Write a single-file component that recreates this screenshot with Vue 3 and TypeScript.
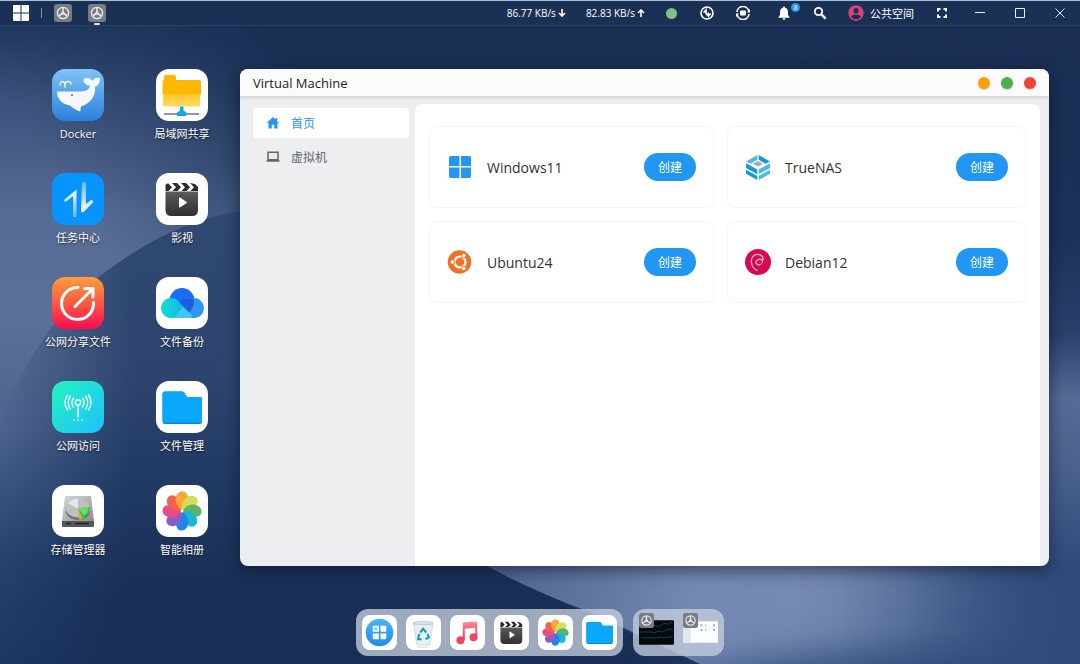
<script setup lang="ts">
interface Entry {
  name: string
  icon: string
}

const shortcuts: Entry[] = [
  { name: 'Docker', icon: 'docker' },
  { name: '局域网共享', icon: 'lan' },
  { name: '任务中心', icon: 'tasks' },
  { name: '影视', icon: 'film' },
  { name: '公网分享文件', icon: 'share' },
  { name: '文件备份', icon: 'backup' },
  { name: '公网访问', icon: 'antenna' },
  { name: '文件管理', icon: 'files' },
  { name: '存储管理器', icon: 'disk' },
  { name: '智能相册', icon: 'photos' },
]

const systems: Entry[] = [
  { name: 'Windows11', icon: 'windows' },
  { name: 'TrueNAS', icon: 'truenas' },
  { name: 'Ubuntu24', icon: 'ubuntu' },
  { name: 'Debian12', icon: 'debian' },
]

const dock: Entry[] = [
  { name: '应用中心', icon: 'apps' },
  { name: '回收站', icon: 'trash' },
  { name: '音乐', icon: 'music' },
  { name: '影视', icon: 'film' },
  { name: '智能相册', icon: 'photos' },
  { name: '文件管理', icon: 'files' },
]

const petals: string[] = ['#ffa733', '#cfe05a', '#5bb26c', '#1cb8d2', '#1f86e6', '#8a5cc6', '#ea4a8a', '#f4604f']
</script>

<template>
  <div class="desktop">
    <svg class="defs" aria-hidden="true">
      <defs>
        <linearGradient id="g-docker" x1="0" y1="0" x2="0" y2="1"><stop offset="0" stop-color="#7fc4f6" /><stop offset="1" stop-color="#2b80dc" /></linearGradient>
        <linearGradient id="g-share" x1="0" y1="0" x2="0" y2="1"><stop offset="0" stop-color="#ff9d3c" /><stop offset="0.5" stop-color="#fd5a42" /><stop offset="1" stop-color="#ff0a50" /></linearGradient>
        <linearGradient id="g-antenna" x1="0" y1="0" x2="1" y2="1"><stop offset="0" stop-color="#22f5bd" /><stop offset="1" stop-color="#1fc0ff" /></linearGradient>
        <linearGradient id="g-up" x1="0" y1="0" x2="0" y2="1"><stop offset="0" stop-color="#fff" /><stop offset="1" stop-color="#fff" stop-opacity="0.35" /></linearGradient>
        <linearGradient id="g-down" x1="0" y1="0" x2="0" y2="1"><stop offset="0" stop-color="#fff" stop-opacity="0.35" /><stop offset="1" stop-color="#fff" /></linearGradient>
        <linearGradient id="g-film" x1="0" y1="0" x2="0" y2="1"><stop offset="0" stop-color="#5a5a5c" /><stop offset="1" stop-color="#303032" /></linearGradient>
        <linearGradient id="g-front" x1="0" y1="0" x2="0" y2="1"><stop offset="0" stop-color="#ffc62c" /><stop offset="1" stop-color="#ffda62" /></linearGradient>
        <linearGradient id="g-cloud" x1="0" y1="0" x2="1" y2="0"><stop offset="0" stop-color="#10dcd6" /><stop offset="1" stop-color="#12aef0" /></linearGradient>
        <linearGradient id="g-apps" x1="0" y1="0" x2="0" y2="1"><stop offset="0" stop-color="#4fb4f4" /><stop offset="1" stop-color="#1f8de8" /></linearGradient>
        <linearGradient id="g-music" x1="0" y1="0" x2="0" y2="1"><stop offset="0" stop-color="#fc8a96" /><stop offset="1" stop-color="#f03552" /></linearGradient>
        <linearGradient id="g-disk" x1="0" y1="0" x2="1" y2="1"><stop offset="0" stop-color="#d8d8d8" /><stop offset="1" stop-color="#8d8d8d" /></linearGradient>
      </defs>

      <symbol id="i-docker" viewBox="0 0 52 52">
        <rect width="52" height="52" fill="url(#g-docker)" />
        <path d="M5 22.500h21c7 0 11-1 12-6-4 0-6.500-2.500-6.500-6.500 4-2 7.500-1 8.500 2 2-3 5-4 8-3 0 5-2 8-5 8.500 1 10-5 17-14 20-1 2 0 4-1 5-3-1-8-4-10-6C10 35 5 30 5 22.500Z" fill="#f5f9ff" />
        <path d="M8 16c0-5 5-4 5 0 0-4 5-5 6-1M13 15v3" fill="none" stroke="#fff" stroke-width="1.300" stroke-linecap="round" />
        <circle cx="20" cy="26" r="1" fill="#3a7fc0" />
      </symbol>

      <symbol id="i-lan" viewBox="0 0 52 52">
        <rect width="52" height="52" fill="#fff" />
        <path d="M8 8q0-2 2-2h8q2 0 2 2v3h23q2 0 2 2v12l-1 2H8l-1.500-2V13q0-2 1.500-2Z" fill="#ffb800" />
        <path d="M7 25h37v11q0 1.500-1.500 1.500h-34Q7 37.500 7 36Z" fill="url(#g-front)" />
        <path d="M8 45h35" stroke="#66788a" stroke-width="1.500" />
        <path d="M24 37.500h3.500v4l3 2V47h-9.500v-3.500l3-2Z" fill="#18a8e8" />
      </symbol>

      <symbol id="i-tasks" viewBox="0 0 52 52">
        <rect width="52" height="52" fill="#0894ff" />
        <path d="M12.500 26.500 24.500 16.500v27q-3.500 2-3.500-1V23l-6.500 5.500Q11 29 12.500 26.500Z" fill="url(#g-up)" />
        <path d="M30 10q2-2.500 4 0v21l5-4q3 0 2 2.500L31 39.500q-2 0-2-2Z" fill="url(#g-down)" />
      </symbol>

      <symbol id="i-film" viewBox="0 0 52 52">
        <rect width="52" height="52" fill="#fff" />
        <path d="M9.500 18.500h32.500V37q0 6-6 6H15.500q-6 0-6-6Z" fill="url(#g-film)" />
        <path d="M9.500 18V12q1-2 3-1.500l3.500 3.800L12.500 18ZM16 10l4 4.300L16.500 18h5l3.500-3.700-4-4.300ZM25 10l4 4.300L25.500 18h5l3.500-3.700-4-4.300ZM34 10l4 4.300L34.500 18H42v-4l-3-3Z" fill="#2c2c2e" />
        <path d="M23 25.500q0-1.500 1.300-.7l6 4q1 .7 0 1.400l-6 4q-1.300.8-1.300-.7Z" fill="#fff" />
      </symbol>

      <symbol id="i-share" viewBox="0 0 52 52">
        <rect width="52" height="52" fill="url(#g-share)" />
        <path d="M26 10.500a16 16 0 1 0 15.500 15" fill="none" stroke="#fff" stroke-width="3" stroke-linecap="round" />
        <path d="M23 29.500 40.500 12M32.500 11.500h8.500V20" fill="none" stroke="#fff" stroke-width="3" stroke-linecap="round" stroke-linejoin="round" />
      </symbol>

      <symbol id="i-backup" viewBox="0 0 52 52">
        <rect width="52" height="52" fill="#fff" />
        <circle cx="26" cy="23.500" r="12.500" fill="#1a6cf2" />
        <path d="M37 41a10 10 0 1 0-5-18L20 41Z" fill="#3294f6" />
        <path d="M26 22h11.800q1 7-4.300 13.500L24 27Z" fill="#1a5fe0" />
        <path d="M15 41a10 10 0 1 1 8-16l13 14q-2 2-5 2Z" fill="url(#g-cloud)" />
        <path d="m27 30 9.500 9-2 2H18Z" fill="#43c7f5" />
      </symbol>

      <symbol id="i-antenna" viewBox="0 0 52 52">
        <rect width="52" height="52" fill="url(#g-antenna)" />
        <g fill="none" stroke="#fff" stroke-width="1.400" stroke-linecap="round">
          <circle cx="26" cy="21.500" r="2.700" />
          <path d="M26 24.500V36M21.500 17q-3 4.500 0 9M18.500 15q-4.500 6.500 0 13M15.500 14q-5 7.500 0 15M30.500 17q3 4.500 0 9M33.500 15q4.500 6.500 0 13M36.500 14q5 7.500 0 15" />
        </g>
        <path d="M21 38.500h1.500v1.500H21ZM25.300 38.500h1.500v1.500h-1.500ZM29.500 38.500H31v1.500h-1.500Z" fill="#fff" />
      </symbol>

      <symbol id="i-files" viewBox="0 0 52 52">
        <rect width="52" height="52" fill="#fff" />
        <path d="M6.500 13q0-2.500 2.500-2.500h17q2 0 2.500 1.500l1.500 3q.5 1 2 1h12q2 0 2 2v22.500q0 2.500-2.500 2.500H9q-2.500 0-2.500-2.500Z" fill="#0b85dc" />
        <path d="M6.500 13q0-2.500 2.500-2.500h17q2 0 2.500 1.500l1.500 3q.5 1 2 1h12q2 0 2 2v21q0 2.500-2.500 2.500H9q-2.500 0-2.500-2.500Z" fill="#0aa8fc" />
      </symbol>

      <symbol id="i-disk" viewBox="0 0 52 52">
        <rect width="52" height="52" fill="#fff" />
        <path d="M13 11h26l3 25H10Z" fill="url(#g-disk)" />
        <path d="M10 36h32v5q0 1-1 1H11q-1 0-1-1Z" fill="#55585a" />
        <path d="M14 38.500h5M23 38.500h14" stroke="#222" stroke-width="1.500" />
        <path d="M14 24v4q3 7 12 7t12-7v-4Z" fill="#727476" />
        <ellipse cx="26" cy="23.500" rx="12" ry="9" fill="#bfc1c1" />
        <path d="m26 23.500-10-5q4-5 10-5Z" fill="#e4e5e5" />
        <path d="M26 23.500 38 22q0 6-5 9v3l-4 1v-3Z" fill="#35bd45" />
        <path d="m26 23.500 1 11h3v-3Z" fill="#e0a53a" />
        <path d="m26 23.500 10-2q1 6-4 9Z" fill="#67dd6c" />
      </symbol>

      <symbol id="i-photos" viewBox="0 0 52 52">
        <rect width="52" height="52" fill="#fff" />
        <path
          v-for="(color, i) in petals"
          :key="color"
          d="M26 26Q18 19 20 12q2-5.500 6.500-5.500T32 12q2 6-6 14Z"
          :fill="color"
          :transform="`rotate(${i * 45} 26 26)`"
        />
        <path d="M26 26Q18 19 20 12q2-5.500 6-5.500Z" fill="#ffa733" />
        <circle cx="26" cy="26" r="1.500" fill="#fff" />
      </symbol>

      <symbol id="i-apps" viewBox="0 0 52 52">
        <rect width="52" height="52" fill="#fff" />
        <circle cx="26" cy="26" r="20.500" fill="url(#g-apps)" />
        <path d="M17 16h8v9h-9v-8q0-1 1-1ZM27.500 16H35q1 0 1 1v8h-8.500ZM16 27.500h9V36h-8q-1 0-1-1ZM27.500 27.500H36V35q0 1-1 1h-7.500Z" fill="#fff" />
        <path d="M18.500 18.500h4v4h-4Z" fill="#7cc6f6" />
      </symbol>

      <symbol id="i-trash" viewBox="0 0 52 52">
        <rect width="52" height="52" fill="#fff" />
        <path d="M11 12h29l-4 32q-10 3-20 0Z" fill="#e8edf2" stroke="#c6cfd8" />
        <ellipse cx="25.500" cy="12" rx="15" ry="2.500" fill="#dce3e9" stroke="#aeb9c4" />
        <path d="M17 47q8 3 17 0" stroke="#dce4ea" stroke-width="2" fill="none" />
        <path d="m21 26 4.500-5.500L30 26M32 28l2 5-5 3M23 36h-5l1.500-8" fill="none" stroke="#139ab3" stroke-width="3" />
      </symbol>

      <symbol id="i-music" viewBox="0 0 52 52">
        <rect width="52" height="52" fill="#fff" />
        <path d="M19 13q0-1.500 1.500-1.700L39 9.500q1.500 0 1.500 1.500v21h-3V19L22 20.500V37h-3Z" fill="url(#g-music)" />
        <circle cx="15.500" cy="37.500" r="6" fill="#f04460" />
        <circle cx="35" cy="33" r="6" fill="#f04460" />
      </symbol>

      <symbol id="i-wheel" viewBox="0 0 18 18">
        <rect width="18" height="18" rx="3" fill="#767b84" />
        <circle cx="9" cy="9" r="5.600" fill="none" stroke="#e6e8ea" stroke-width="1.400" />
        <path d="M9 3.500V9M9 9l-4.500 3M9 9l4.500 3" stroke="#e6e8ea" stroke-width="1.600" />
        <circle cx="9" cy="9" r="1.600" fill="#e6e8ea" />
      </symbol>

      <symbol id="i-windows" viewBox="0 0 26 26">
        <path d="M4 2h8.500v10H2V4q0-2 2-2ZM14 2h8q2 0 2 2v8H14ZM2 13.500h10.500V24H4q-2 0-2-2ZM14 13.500h10V22q0 2-2 2h-8Z" fill="#2196f3" />
      </symbol>

      <symbol id="i-truenas" viewBox="0 0 26 26">
        <path d="M1 9.200 12.300 15.500v4.800L1 14ZM1 15.700 12.300 22v4L1 19.800Z" fill="#159bd2" />
        <path d="M25 9.200 13.700 15.500v4.800L25 14ZM25 15.700 13.700 22v4L25 19.800Z" fill="#4bb9e8" />
        <path d="M1 7.500 12.300 1v4.800L5.500 9.700Z" fill="#4bb9e8" />
        <path d="M25 7.500 13.700 1v4.800l6.800 3.900Z" fill="#159bd2" />
        <path d="m13 7 5 2.800-5 2.800-5-2.800Z" fill="#a4abb0" />
      </symbol>

      <symbol id="i-ubuntu" viewBox="0 0 26 26">
        <circle cx="12.500" cy="13" r="11.800" fill="#ee7325" />
        <circle cx="13" cy="13" r="5.500" fill="none" stroke="#fff" stroke-width="2.200" />
        <g fill="#fff" stroke="#ee7325" stroke-width="1">
          <circle cx="5.500" cy="13" r="2.300" />
          <circle cx="16.800" cy="6.500" r="2.300" />
          <circle cx="16.800" cy="19.500" r="2.300" />
        </g>
      </symbol>

      <symbol id="i-debian" viewBox="0 0 26 26">
        <circle cx="13" cy="13" r="13" fill="#d40a53" />
        <path d="M14.500 15.800c-2.500.4-4-1.300-3.300-3.400.8-2.300 4.500-3 6.200-.8 1.700-3-1-6.500-5-6.300-4 .2-6.500 3.500-6 8 .4 4 2.600 6.600 5.500 8" fill="none" stroke="#f5b7cc" stroke-width="1.300" stroke-linecap="round" />
        <path d="M14.500 15.800c2-.3 3.300-2 2.900-4.200" fill="none" stroke="#f5b7cc" />
      </symbol>
    </svg>

    <svg class="wallpaper" viewBox="0 0 1080 664" preserveAspectRatio="none" aria-hidden="true">
      <defs>
        <linearGradient id="w-base" x1="0" y1="0" x2="0" y2="1">
          <stop offset="0" stop-color="#1b3156" />
          <stop offset="0.060" stop-color="#263d66" />
          <stop offset="0.150" stop-color="#3b527c" />
          <stop offset="0.320" stop-color="#556b94" />
          <stop offset="0.480" stop-color="#5b7098" />
          <stop offset="0.640" stop-color="#4d648e" />
          <stop offset="0.840" stop-color="#274370" />
          <stop offset="1" stop-color="#1d3763" />
        </linearGradient>
        <linearGradient id="w-top" x1="120" y1="260" x2="330" y2="110" gradientUnits="userSpaceOnUse">
          <stop offset="0" stop-color="#1a2f54" stop-opacity="0" />
          <stop offset="0.500" stop-color="#1a2f54" stop-opacity="0.400" />
          <stop offset="1" stop-color="#1a2f54" />
        </linearGradient>
        <linearGradient id="w-hill" x1="0" y1="200" x2="0" y2="600" gradientUnits="userSpaceOnUse">
          <stop offset="0" stop-color="#304971" />
          <stop offset="0.450" stop-color="#2d456e" />
          <stop offset="0.750" stop-color="#1f3861" />
          <stop offset="1" stop-color="#182e55" />
        </linearGradient>
        <linearGradient id="w-fade" x1="0" y1="0" x2="130" y2="0" gradientUnits="userSpaceOnUse">
          <stop offset="0" stop-color="#fff" stop-opacity="0" />
          <stop offset="0.500" stop-color="#fff" stop-opacity="0.500" />
          <stop offset="1" stop-color="#fff" />
        </linearGradient>
        <mask id="w-hill-mask" maskUnits="userSpaceOnUse" x="0" y="0" width="1080" height="664">
          <rect width="1080" height="664" fill="url(#w-fade)" />
        </mask>
        <linearGradient id="w-low" x1="480" y1="0" x2="1080" y2="0" gradientUnits="userSpaceOnUse">
          <stop offset="0" stop-color="#4a628d" />
          <stop offset="0.350" stop-color="#7388b0" />
          <stop offset="0.600" stop-color="#758ab1" />
          <stop offset="1" stop-color="#365282" />
        </linearGradient>
        <linearGradient id="w-side" x1="0" y1="0" x2="0" y2="1">
          <stop offset="0" stop-color="#1a2e53" />
          <stop offset="0.350" stop-color="#1b3158" />
          <stop offset="0.500" stop-color="#28406b" />
          <stop offset="0.600" stop-color="#566b96" />
          <stop offset="0.700" stop-color="#4b628e" />
          <stop offset="0.850" stop-color="#304b7b" />
          <stop offset="1" stop-color="#304b7b" />
        </linearGradient>
        <linearGradient id="w-side-fade" x1="800" y1="0" x2="1060" y2="0" gradientUnits="userSpaceOnUse">
          <stop offset="0" stop-color="#fff" stop-opacity="0" />
          <stop offset="0.400" stop-color="#fff" stop-opacity="0.200" />
          <stop offset="1" stop-color="#fff" />
        </linearGradient>
        <mask id="w-side-mask" maskUnits="userSpaceOnUse" x="800" y="0" width="280" height="664">
          <rect x="800" width="280" height="664" fill="url(#w-side-fade)" />
        </mask>
        <filter id="w-soft" filterUnits="userSpaceOnUse" x="400" y="500" width="900" height="400"><feGaussianBlur stdDeviation="18" /></filter>
      </defs>
      <rect width="1080" height="664" fill="url(#w-base)" />
      <rect width="1080" height="420" fill="url(#w-top)" />
      <path d="M0 420Q40 325 100 276 170 222 240 211L480 420 487 566 590 615 700 664H0Z" fill="url(#w-hill)" mask="url(#w-hill-mask)" />
      <path d="M400 480 487 566Q535 592 590 612L700 664H1080V480Z" fill="url(#w-low)" />
      <path d="M640 690Q820 630 1180 650V760H640Z" fill="#36517f" filter="url(#w-soft)" />
      <rect x="800" width="280" height="664" fill="url(#w-side)" mask="url(#w-side-mask)" />
    </svg>

    <header class="topbar">
      <nav class="tasks" aria-label="任务栏">
        <button class="bar-button start" aria-label="开始">
          <svg viewBox="0 0 16 16" width="16" height="16"><path d="M1 0h6.500v7.500H0V1q0-1 1-1ZM8.500 0H15q1 0 1 1v6.500H8.500ZM0 8.500h7.500V16H1q-1 0-1-1ZM8.500 8.500H16V15q0 1-1 1H8.500Z" fill="#fff" /></svg>
        </button>
        <span class="bar-divider"></span>
        <button class="bar-button task" aria-label="虚拟机"><svg width="18" height="18"><use href="#i-wheel" /></svg></button>
        <button class="bar-button task active" aria-label="Virtual Machine"><svg width="18" height="18"><use href="#i-wheel" /></svg></button>
      </nav>

      <div class="status">
        <span class="speed">86.77 KB/s<svg viewBox="0 0 8 8" width="8" height="8"><path d="M4 0v6.500M1 4l3 3 3-3" fill="none" stroke="#fff" stroke-width="1.600" /></svg></span>
        <span class="speed">82.83 KB/s<svg viewBox="0 0 8 8" width="8" height="8"><path d="M4 8V1.500M1 4l3-3 3 3" fill="none" stroke="#fff" stroke-width="1.600" /></svg></span>
        <span class="bar-button tool"><i class="online"></i></span>
        <button class="bar-button tool" aria-label="传输">
          <svg viewBox="0 0 14 14" width="14" height="14" fill="none" stroke="#fff" stroke-width="1.600"><circle cx="7" cy="7" r="6" /><path d="M3.500 6.500 6 4v3.500L8.300 10V6.500M8.300 10l2.500-2.500" /></svg>
        </button>
        <button class="bar-button tool" aria-label="同步">
          <svg viewBox="0 0 14 14" width="14" height="14"><path d="M1 6A6 6 0 0 1 12.800 5M13 8A6 6 0 0 1 1.200 9" fill="none" stroke="#fff" stroke-width="1.700" /><path d="M14 3v3.500h-3ZM0 11V7.500h3Z" fill="#fff" /><rect x="4" y="4.500" width="6" height="5" rx="1" fill="#fff" /></svg>
        </button>
        <button class="bar-button tool bell" aria-label="通知">
          <svg viewBox="0 0 14 14" width="14" height="14"><path d="M7 .5q1 0 1 1.200Q11 2.500 11 6v3l1.500 2v.7h-11V11L3 9V6q0-3.500 3-4.300Q6 .5 7 .5ZM5.500 12.300h3Q8.300 13.800 7 13.800T5.500 12.300Z" fill="#fff" /></svg>
          <span class="badge">8</span>
        </button>
        <button class="bar-button tool" aria-label="搜索">
          <svg viewBox="0 0 14 14" width="14" height="14" fill="none" stroke="#fff"><circle cx="5.500" cy="5.500" r="3.700" stroke-width="1.800" /><path d="m8.300 8.300 4.400 4.400" stroke-width="2.400" /></svg>
        </button>
        <button class="bar-button user">
          <svg viewBox="0 0 16 16" width="16" height="16"><circle cx="8" cy="8" r="7.700" fill="#dc407c" /><circle cx="8" cy="5.700" r="2.600" fill="#1c2f56" /><path d="M3 12q1.500-2.800 5-2.800t5 2.800q-2 2.200-5 2.200T3 12Z" fill="#1c2f56" /></svg>
          公共空间
        </button>
        <button class="bar-button tool" aria-label="全屏">
          <svg viewBox="0 0 12 12" width="12" height="12"><path d="M2 4.500V2h2.500M7.500 2H10v2.500M10 7.500V10H7.500M4.500 10H2V7.500" fill="none" stroke="#fff" stroke-width="2" /></svg>
        </button>
        <button class="bar-button control" aria-label="最小化"><svg viewBox="0 0 10 10" width="10" height="10"><path d="M0 4.500h10" stroke="#e6ebf4" /></svg></button>
        <button class="bar-button control" aria-label="最大化"><svg viewBox="0 0 10 10" width="10" height="10"><path d="M.5.5h9v9h-9Z" fill="none" stroke="#e6ebf4" /></svg></button>
        <button class="bar-button control" aria-label="关闭"><svg viewBox="0 0 10 10" width="10" height="10"><path d="m.5.5 9 9M9.500.5l-9 9" stroke="#e6ebf4" /></svg></button>
      </div>
    </header>

    <main class="workspace">
      <div class="shortcuts">
        <button v-for="item in shortcuts" :key="item.name" class="shortcut">
          <svg class="tile"><use :href="`#i-${item.icon}`" /></svg>
          <span>{{ item.name }}</span>
        </button>
      </div>

      <section class="window">
        <header class="titlebar">
          <h1>Virtual Machine</h1>
          <div class="lights">
            <button class="light orange" aria-label="最小化"></button>
            <button class="light green" aria-label="最大化"></button>
            <button class="light red" aria-label="关闭"></button>
          </div>
        </header>
        <div class="body">
          <nav class="sidebar">
            <a href="#home" class="link current">
              <svg viewBox="0 0 14 14" width="14" height="14"><path d="M7 1 .8 7h1.700v5.500h3.300V8.800h2.400v3.700h3.300V7h1.700L11 4.900V2H9.500v1.400Z" fill="currentColor" /></svg>
              首页
            </a>
            <a href="#machines" class="link">
              <svg viewBox="0 0 14 14" width="14" height="14"><path d="M2 2.200h10v7.600H2ZM.5 11h13" fill="none" stroke="currentColor" stroke-width="1.500" /></svg>
              虚拟机
            </a>
          </nav>
          <div class="panel">
            <article v-for="system in systems" :key="system.name" class="card">
              <svg class="os"><use :href="`#i-${system.icon}`" /></svg>
              <h2>{{ system.name }}</h2>
              <button class="create">创建</button>
            </article>
          </div>
        </div>
      </section>
    </main>

    <footer class="docks">
      <div class="dock">
        <template v-for="(item, i) in dock" :key="item.icon">
          <span v-if="i === 2" class="dock-divider"></span>
          <button class="dock-item" :aria-label="item.name"><svg class="tile"><use :href="`#i-${item.icon}`" /></svg></button>
        </template>
      </div>
      <div class="dock">
        <button class="thumb" aria-label="终端">
          <svg class="preview" viewBox="0 0 36 25"><rect width="36" height="25" rx="1" fill="#05090d" /><path d="M2 6h10l3-1 3 1h3l5-3 4 1 4-2M1 12h12l3 1 4-2 4 1 6-3 5 1M2 18h16l4-1 4 1 9-1" fill="none" stroke="#1b5358" stroke-width="0.800" /></svg>
          <svg class="mark"><use href="#i-wheel" /></svg>
        </button>
        <button class="thumb" aria-label="Virtual Machine">
          <svg class="preview" viewBox="0 0 36 25"><rect width="36" height="22" y="1" fill="#fcfdfe" /><path d="M0 1h8v22H0Z" fill="#e3e8ed" /><path d="M18 4h2v2h-2ZM18 9h2v2h-2ZM23 4h1v2h-1ZM31 4h2v2h-2ZM31 9h2v2h-2ZM23 9h1v2h-1Z" fill="#86bce0" /></svg>
          <svg class="mark"><use href="#i-wheel" /></svg>
        </button>
      </div>
    </footer>
  </div>
</template>

<style>
body {
  margin: 0;
}
</style>

<style scoped>
.desktop {
  position: relative;
  isolation: isolate;
  display: flex;
  flex-direction: column;
  min-height: 100vh;
  overflow: hidden;
  background: #1b3156;
  color: #fff;
  font-family: "Open Sans", "Noto Sans", "Noto Sans CJK SC", sans-serif;
  font-size: 12px;
}

.defs {
  position: absolute;
  width: 0;
  height: 0;
}

.wallpaper {
  position: absolute;
  inset: 0;
  z-index: -1;
  width: 100%;
  height: 100%;
}

button {
  margin: 0;
  padding: 0;
  border: 0;
  background: none;
  color: inherit;
  font: inherit;
  cursor: pointer;
}

svg {
  flex: none;
}

.topbar {
  box-sizing: border-box;
  display: flex;
  justify-content: space-between;
  height: 26px;
  border-top: 1px solid #a5c3d4;
  border-bottom: 1px solid #2a4069;
  background: #1b3055;
}

.tasks,
.status {
  display: flex;
  align-items: center;
}

.bar-button {
  display: flex;
  align-items: center;
  justify-content: center;
  height: 24px;
}

.start {
  width: 41px;
}

.bar-divider {
  width: 1px;
  height: 10px;
  margin-right: 4px;
  background: #7f8da8;
}

.task {
  position: relative;
  width: 34px;
}

.task.active::after {
  content: "";
  position: absolute;
  bottom: 0;
  left: 14px;
  width: 6px;
  height: 2px;
  border-radius: 1px;
  background: #dfe8f5;
}

.speed {
  display: flex;
  align-items: center;
  gap: 2px;
  margin-right: 20px;
  font-size: 10px;
}

.tool {
  width: 36px;
}

.speed + .tool {
  margin-left: -12px;
}

.online {
  width: 11px;
  height: 11px;
  border-radius: 50%;
  background: #7cc47f;
}

.bell {
  position: relative;
  margin-left: 5px;
}

.badge {
  position: absolute;
  top: 2px;
  right: 2px;
  width: 9px;
  height: 9px;
  border-radius: 50%;
  background: #2795ea;
  font-size: 7px;
  line-height: 9px;
}

.user {
  gap: 6px;
  margin: 0 10px;
  font-size: 11px;
}

.control {
  width: 40px;
}

.workspace {
  display: flex;
  flex: 1;
  padding: 43px 31px 0 0;
}

.shortcuts {
  display: grid;
  flex: none;
  grid-template-columns: 104px 104px;
  align-content: start;
  row-gap: 31px;
  width: 214px;
  padding-left: 26px;
}

.shortcut {
  display: flex;
  flex-direction: column;
  align-items: center;
  gap: 5px;
  font-size: 11px;
  line-height: 16px;
  text-shadow: 0 1px 2px rgb(0 0 0 / 70%);
}

.tile {
  display: block;
  width: 52px;
  height: 52px;
  border-radius: 13px;
}

.window {
  display: flex;
  flex: 1;
  flex-direction: column;
  overflow: hidden;
  border-radius: 8px;
  background: #eceef0;
  box-shadow: 0 4px 16px rgb(8 18 40 / 60%);
  color: #303236;
}

.titlebar {
  position: relative;
  display: flex;
  align-items: center;
  justify-content: space-between;
  height: 27px;
  padding: 0 13px;
  background: #fbfbfb;
  box-shadow: 0 1px 4px rgb(0 0 0 / 15%);
}

h1,
h2 {
  margin: 0;
  font-weight: 400;
}

h1 {
  font-size: 13px;
  color: #222;
}

.lights {
  display: flex;
  gap: 11px;
}

.light {
  width: 12px;
  height: 12px;
  border-radius: 50%;
  box-shadow: 0 1px 2px rgb(0 0 0 / 20%);
}

.orange {
  background: #ff9c0a;
}

.green {
  background: #4caf50;
}

.red {
  background: #f04438;
}

.body {
  display: flex;
  flex: 1;
  padding: 8px 9px 0 13px;
}

.sidebar {
  display: flex;
  flex: none;
  flex-direction: column;
  gap: 4px;
  width: 156px;
  margin-right: 6px;
  padding-top: 4px;
}

.link {
  display: flex;
  align-items: center;
  gap: 11px;
  height: 30px;
  padding-left: 13px;
  border-radius: 4px;
  color: #63666a;
  text-decoration: none;
}

.link.current {
  background: #fff;
  color: #2196f3;
}

.panel {
  display: grid;
  flex: 1;
  grid-template-columns: 285fr 299fr;
  grid-auto-rows: 82px;
  gap: 13px;
  align-content: start;
  padding: 22px 14px;
  border-radius: 8px 8px 0 0;
  background: #fff;
}

.card {
  display: flex;
  align-items: center;
  gap: 14px;
  padding: 0 17px;
  border: 1px solid #f3f4f5;
  border-radius: 8px;
}

.os {
  width: 26px;
  height: 26px;
}

h2 {
  flex: 1;
  font-size: 14px;
}

.create {
  width: 52px;
  height: 28px;
  border-radius: 14px;
  background: #2196f3;
  color: #fff;
}

.docks {
  display: flex;
  justify-content: center;
  gap: 10px;
  padding: 43px 0 8px;
}

.dock {
  display: flex;
  align-items: center;
  gap: 9px;
  padding: 6px;
  border-radius: 12px;
  background: rgb(196 205 221 / 78%);
}

.dock-item .tile {
  width: 35px;
  height: 35px;
  border-radius: 8px;
}

.dock-divider {
  width: 1px;
  height: 24px;
  margin: 0 -5px;
  background: #a9b5c7;
}

.thumb {
  position: relative;
  display: flex;
  align-items: center;
  width: 35px;
  height: 35px;
}

.preview {
  width: 35px;
  height: 25px;
}

.mark {
  position: absolute;
  top: -2px;
  left: 0;
  width: 15px;
  height: 15px;
}
</style>
